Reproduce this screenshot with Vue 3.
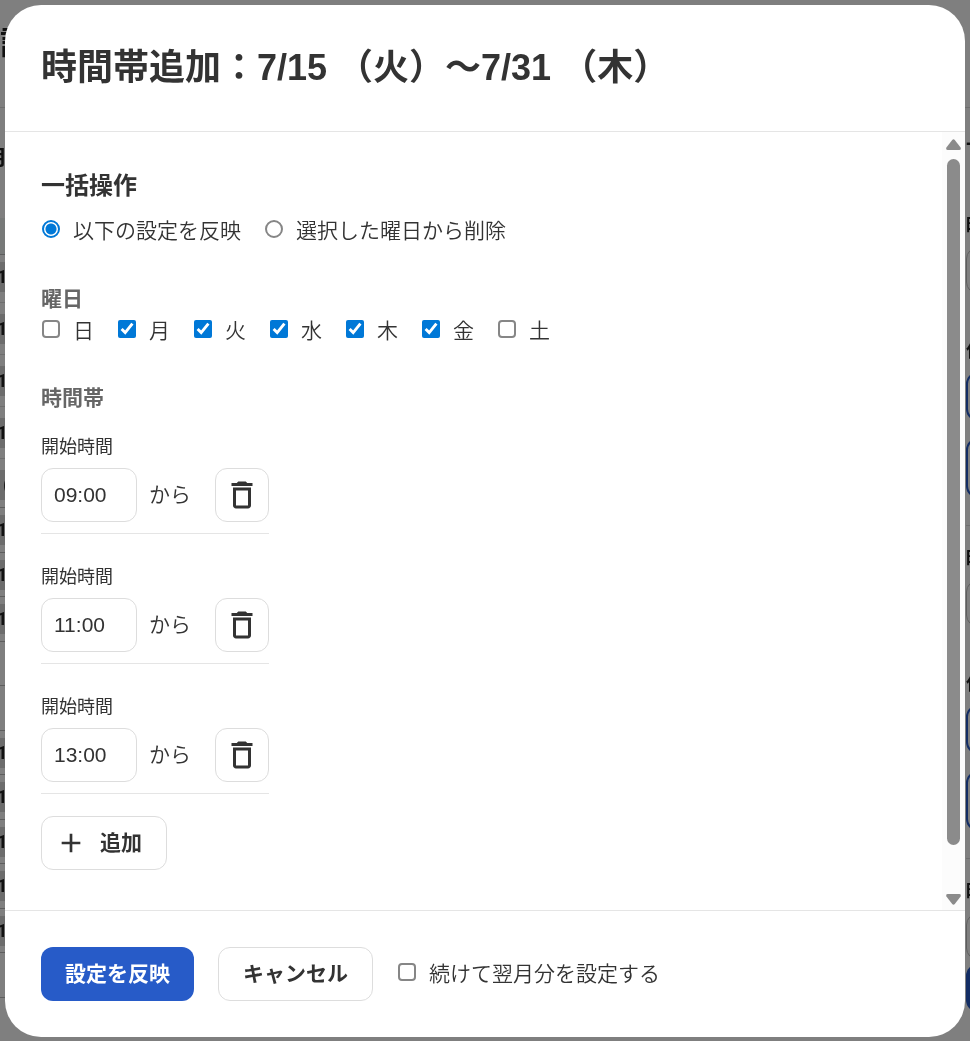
<script setup>
import { ref } from 'vue'

const mode = ref('apply')
const days = ref([
  { key: 'sun', label: '日', checked: false },
  { key: 'mon', label: '月', checked: true },
  { key: 'tue', label: '火', checked: true },
  { key: 'wed', label: '水', checked: true },
  { key: 'thu', label: '木', checked: true },
  { key: 'fri', label: '金', checked: true },
  { key: 'sat', label: '土', checked: false },
])
const slots = ref([
  { id: 1, start: '09:00' },
  { id: 2, start: '11:00' },
  { id: 3, start: '13:00' },
])
const continueNext = ref(false)
let nextId = 4

// rows of the calendar behind the dialog
const tallRows = ['1', '1', '1', '1', '(']
const shortRows = ['1', '1', '1', '', '', '1', '1', '1', '1', '1', '']

function addSlot() {
  slots.value.push({ id: nextId++, start: '' })
}
function removeSlot(id) {
  slots.value = slots.value.filter((s) => s.id !== id)
}
</script>

<template>
  <div class="page" aria-hidden="true">
    <div class="page-head">設</div>
    <div class="page-body">
      <div class="calendar">
        <div class="cal-month">月</div>
        <div class="cal-band"></div>
        <div v-for="(r, i) in tallRows" :key="'t' + i" class="cal-row tall">
          <span class="cal-chip" :class="{ open: r === '(' }">{{ r }}</span>
        </div>
        <div v-for="(r, i) in shortRows" :key="'s' + i" class="cal-row">
          <span v-if="r" class="cal-chip">{{ r }}</span>
        </div>
      </div>
      <div class="side">
        <div class="side-title">-</div>
        <div v-for="n in 2" :key="n" class="side-group">
          <div class="side-label">時</div>
          <div class="side-field"></div>
          <div class="side-label sub">仕</div>
          <div class="side-btn"></div>
          <div class="side-btn large"></div>
        </div>
        <div class="side-group">
          <div class="side-label">時</div>
          <div class="side-field"></div>
          <div class="side-submit"></div>
        </div>
      </div>
    </div>
  </div>
  <div class="overlay"></div>

  <div class="modal" role="dialog" aria-labelledby="modal-title">
    <header class="modal-header">
      <h1 id="modal-title">時間帯追加：7/15 （火）〜7/31 （木）</h1>
    </header>

    <div class="modal-main">
      <div class="modal-content">
        <h2>一括操作</h2>
        <div class="choices">
          <label class="choice">
            <input v-model="mode" type="radio" name="mode" value="apply" />
            <span>以下の設定を反映</span>
          </label>
          <label class="choice">
            <input v-model="mode" type="radio" name="mode" value="delete" />
            <span>選択した曜日から削除</span>
          </label>
        </div>

        <h3>曜日</h3>
        <div class="choices days">
          <label v-for="d in days" :key="d.key" class="choice">
            <input v-model="d.checked" type="checkbox" />
            <span>{{ d.label }}</span>
          </label>
        </div>

        <h3>時間帯</h3>
        <div class="slots">
          <div v-for="s in slots" :key="s.id" class="slot">
            <label class="slot-label" :for="'start-' + s.id">開始時間</label>
            <div class="slot-row">
              <input :id="'start-' + s.id" v-model="s.start" class="time" type="text" />
              <span class="from">から</span>
              <button class="btn btn-icon" type="button" aria-label="削除" @click="removeSlot(s.id)">
                <svg class="icon-trash" viewBox="0 0 24 24">
                  <path d="M6 19c0 1.1.9 2 2 2h8c1.1 0 2-.9 2-2V7H6v12zM8 9h8v10H8V9zm7.5-5-1-1h-5l-1 1H5v2h14V4h-3.5z" />
                </svg>
              </button>
            </div>
          </div>
        </div>
        <button class="btn btn-add" type="button" @click="addSlot">
          <svg class="icon-plus" viewBox="0 0 24 24">
            <path d="M19 13h-6v6h-2v-6H5v-2h6V5h2v6h6v2z" />
          </svg>
          追加
        </button>
      </div>

      <div class="scrollbar" aria-hidden="true">
        <svg class="arrow" viewBox="0 0 15 11">
          <path d="M6.2 1Q7.5-.6 8.8 1L14.6 8.6Q15.4 11 13.2 11H1.8Q-.4 11 .4 8.6Z" />
        </svg>
        <div class="track"><div class="thumb"></div></div>
        <svg class="arrow" viewBox="0 0 15 11">
          <path d="M6.2 10Q7.5 11.6 8.8 10L14.6 2.4Q15.4 0 13.2 0H1.8Q-.4 0 .4 2.4Z" />
        </svg>
      </div>
    </div>

    <footer class="modal-footer">
      <button class="btn btn-primary" type="button">設定を反映</button>
      <button class="btn" type="button">キャンセル</button>
      <label class="choice">
        <input v-model="continueNext" type="checkbox" />
        <span>続けて翌月分を設定する</span>
      </label>
    </footer>
  </div>
</template>

<style>
body {
  margin: 0;
  background: #fff;
}
</style>

<style scoped>
.page,
.modal {
  font-family: "Liberation Sans", "Noto Sans CJK JP", sans-serif;
  color: #333;
  box-sizing: border-box;
}
.page *,
.modal * {
  box-sizing: border-box;
}

/* page behind the dialog */
.page {
  position: fixed;
  inset: 0;
  overflow: hidden;
  color: #222;
  font-weight: 700;
}
.page-head {
  height: 108px;
  padding-top: 16px;
  border-bottom: 1px solid #ddd;
  font-size: 32px;
  line-height: 54px;
}
.page-body {
  display: flex;
  justify-content: space-between;
}
.calendar {
  width: 20px;
}
.cal-month {
  height: 110px;
  padding-top: 36px;
  font-size: 20px;
  line-height: 28px;
  text-indent: -13px;
}
.cal-band {
  height: 37px;
  background: #eef3f1;
  border-bottom: 1px solid #bbb;
}
.cal-row {
  height: 44px;
  padding-top: 7px;
  border-bottom: 1px solid #bbb;
}
.cal-row:nth-child(even) {
  height: 45px;
}
.cal-row.tall {
  height: 52px;
  padding-top: 11px;
  border-color: #ddd;
}
.cal-band + .cal-row.tall {
  height: 48px;
  padding-top: 7px;
}
.cal-row.tall:nth-child(7) {
  height: 49px;
  border-color: #bbb;
}
.cal-chip {
  display: block;
  height: 30px;
  background: #d8d8d8;
  font-family: Roboto, "Liberation Sans", sans-serif;
  font-size: 18px;
  line-height: 30px;
  text-indent: -3px;
}
.cal-chip.open {
  text-indent: 3px;
}
.side {
  width: 4px;
}
.side-title {
  height: 100px;
  padding-top: 20px;
  font-size: 20px;
  line-height: 28px;
}
.side-group {
  height: 318px;
  margin-bottom: 15px;
  border-bottom: 1px solid #ddd;
  white-space: nowrap;
}
.side-label {
  height: 39px;
  font-size: 18px;
  line-height: 36px;
}
.side-field {
  width: 60px;
  height: 47px;
  border: 1px solid #bbb;
  border-radius: 12px;
}
.side-label.sub {
  height: 78px;
  padding-top: 39px;
}
.side-btn {
  width: 60px;
  height: 49px;
  margin-bottom: 17px;
  border: 2px solid #275bc8;
  border-radius: 12px;
}
.side-btn.large {
  height: 60px;
}
.side-submit {
  width: 60px;
  height: 48px;
  margin-top: 4px;
  border-radius: 12px;
  background: #275bc8;
}
.overlay {
  position: fixed;
  inset: 0;
  background: rgba(0, 0, 0, 0.5);
}

/* dialog */
.modal {
  position: fixed;
  inset: 5px 5px 4px;
  display: flex;
  flex-direction: column;
  overflow: hidden;
  border-radius: 36px;
  background: #fff;
  font-size: 21px;
  line-height: 32px;
}
.modal-header {
  padding: 36px;
  border-bottom: 1px solid #e5e5e5;
}
h1,
h2,
h3 {
  margin: 0;
  font-weight: 700;
}
h1 {
  font-size: 36px;
  line-height: 54px;
}
h2 {
  margin-bottom: 11px;
  font-size: 24px;
  line-height: 36px;
}
h3 {
  color: #666;
  font-size: 21px;
  line-height: 32px;
}
.modal-main {
  display: flex;
  flex: 1;
  min-height: 0;
}
.modal-content {
  flex: 1;
  padding: 36px;
  overflow: hidden;
}
.choices {
  display: flex;
  flex-wrap: wrap;
  gap: 0 23px;
  margin-bottom: 36px;
}
.choices.days {
  margin-bottom: 35px;
}
.choice {
  display: flex;
  align-items: center;
  gap: 12px;
  font-weight: 350;
}
.choice input {
  width: 18px;
  height: 18px;
  margin: 0 1px 4px;
  accent-color: #0078d7;
}
.choice input[type="radio"],
.choice input[type="checkbox"]:not(:checked) {
  appearance: none;
  border: 2px solid #868686;
  border-radius: 4px;
  background: #fff;
}
.choice input[type="radio"] {
  padding: 2px;
  border-radius: 50%;
}
.choice input[type="radio"]:checked {
  border-color: #0078d7;
  background: radial-gradient(circle, #0078d7 5px, #fff 6px);
}
.slots {
  display: flex;
  flex-direction: column;
  align-items: flex-start;
  gap: 30px;
  margin: 20px 0 22px;
}
.slot {
  padding-bottom: 11px;
  border-bottom: 1px solid #e5e5e5;
}
.slot-label {
  display: block;
  margin-bottom: 7px;
  font-size: 18px;
  line-height: 27px;
}
.slot-row {
  display: flex;
  align-items: center;
}
.time {
  width: 96px;
  height: 54px;
  padding: 0 12px;
  border: 1px solid #ddd;
  border-radius: 12px;
  background: #fff;
  color: #333;
  font: inherit;
}
.from {
  margin: 0 24px 0 12px;
  font-weight: 350;
}
.btn {
  display: inline-flex;
  align-items: center;
  justify-content: center;
  height: 54px;
  padding: 0 24px;
  border: 1px solid #ddd;
  border-radius: 12px;
  background: #fff;
  color: #333;
  font: inherit;
  font-weight: 700;
  cursor: pointer;
}
.btn svg {
  fill: currentColor;
}
.btn-icon {
  width: 54px;
  padding: 0;
}
.icon-trash {
  width: 36px;
  height: 36px;
}
.btn-add {
  gap: 13px;
  padding-left: 13px;
}
.icon-plus {
  width: 32px;
  height: 32px;
}
.btn-primary {
  border: 0;
  background: #275bc8;
  color: #fff;
}
.scrollbar {
  display: flex;
  flex-direction: column;
  align-items: center;
  gap: 9px;
  width: 23px;
  padding: 7px 0 5px;
  background: #fcfcfc;
}
.arrow {
  width: 15px;
  height: 11px;
  fill: #8b8b8b;
}
.track {
  display: grid;
  flex: 1;
  grid-template-rows: 17fr 1fr;
  width: 13px;
}
.thumb {
  border-radius: 7px;
  background: #8b8b8b;
}
.modal-footer {
  display: flex;
  flex-wrap: wrap;
  align-items: center;
  gap: 24px;
  padding: 36px;
  border-top: 1px solid #e5e5e5;
}
</style>
